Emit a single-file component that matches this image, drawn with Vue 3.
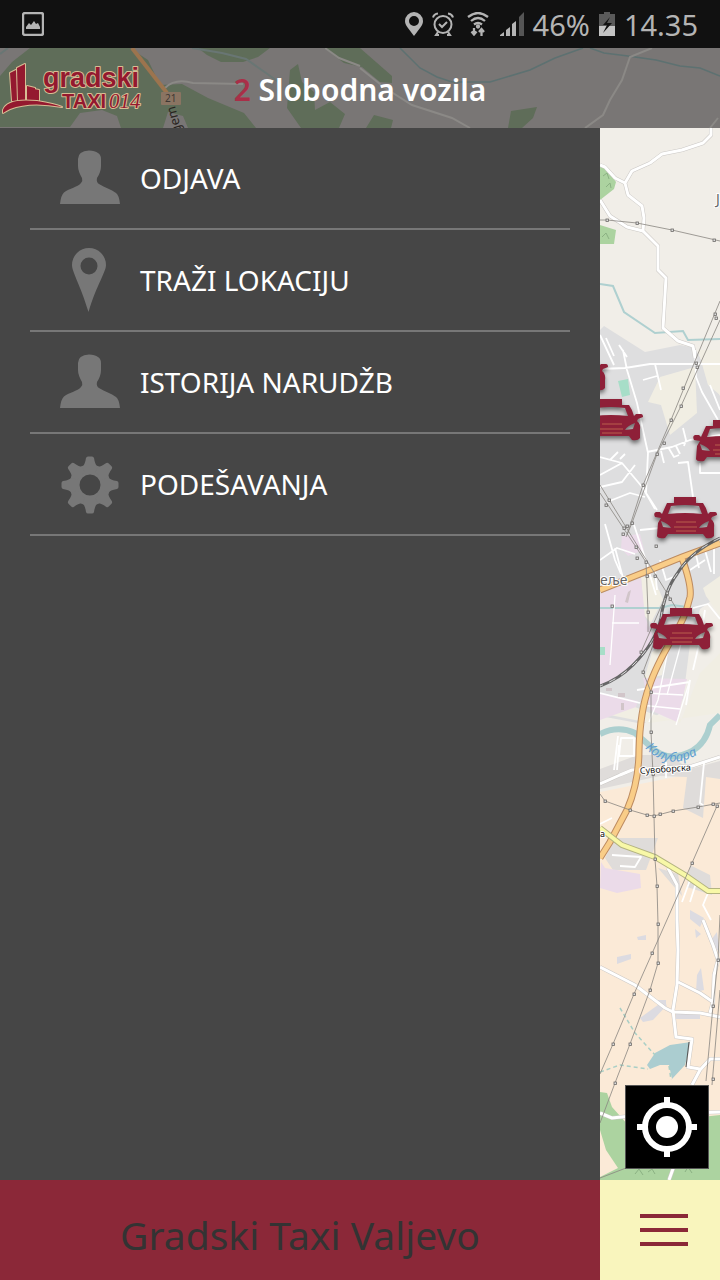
<template>
  <div class="app">
    <div class="status-bar">
      <svg class="status-picture" width="22" height="24" viewBox="0 0 22 24">
        <rect x="1" y="1" width="20" height="22" rx="2" fill="none" stroke="#b4b4b4" stroke-width="2.4" />
        <path d="M4 17v-2l3-4 2 2 3-4 2 3 2-1 2 4v2z" fill="#b4b4b4" />
      </svg>
      <div class="status-right">
        <svg width="18" height="24" viewBox="0 0 18 24">
          <path fill-rule="evenodd" d="M9 0a9 9 0 0 0-9 9c0 4 3 7 9 15 6-8 9-11 9-15a9 9 0 0 0-9-9zm0 4a5 5 0 1 1 0 10 5 5 0 0 1 0-10z" fill="#b4b4b4" />
        </svg>
        <svg width="22" height="24" viewBox="0 0 22 24" fill="none" stroke="#b4b4b4" stroke-width="2">
          <circle cx="11" cy="12.500" r="8.500" />
          <path d="M1 5.500Q2 2 6 1.500M21 5.500Q20 2 16 1.500M7 12l3 3 5-5M6 20l-2 3h3M16 20l2 3h-3" />
        </svg>
        <svg width="28" height="24" viewBox="0 0 28 24" fill="none" stroke="#b4b4b4" stroke-width="2.300">
          <path d="M5 5Q15-3 25 5M8 9Q15 3 22 9M11 12.500Q15 9.500 19 12.500" />
          <circle cx="15" cy="14.500" r="1" />
          <path d="M11 16v6M8.500 19.500l2.500 3 2.500-3M18.500 24v-6M16 20l2.500-3 2.500 3" />
        </svg>
        <svg width="24" height="24" viewBox="0 0 24 24" fill="#b4b4b4">
          <path d="M0 24v-1l4-3v4zM6 24v-6l4-3v9zM12 24V12l4-3v15z" />
          <path d="M19 24V5l5-5v24z" fill="#555" />
        </svg>
        <span class="battery-level">46%</span>
        <svg width="16" height="24" viewBox="0 0 16 24">
          <path d="M0 2h5V0h6v2h5v12H0z" fill="#5a5a5a" />
          <path d="M0 14h16v10H0z" fill="#c4c4c4" />
          <path d="M11 5 4 13h4l-4 8 9-10H8z" fill="#111" />
        </svg>
        <span class="clock">14.35</span>
      </div>
    </div>

    <header class="top-bar">
      <svg class="top-map" viewBox="0 48 720 80" preserveAspectRatio="xMinYMin slice">
        <rect y="48" width="720" height="80" fill="#797675" />
        <g fill="#5f6d59">
          <path d="M0 76 12 62 30 48h100l18 12 12 25 22-1 26 14 36 15 12 15h-68l-5-12-15-4-5 16h-42l-4-12-15-6-22 3-10 14H0z" />
          <path d="M198 48h72l-12 9-15 5-22 0-14-7zM290 70l8-6 4 18 12 10 1 18 15-8 15 12-6 14h-38l-14-20zM324 48h36l32 28v7l-12-1-18-15-18-4zM366 128l8-13 19 5-2 8zM511 111l26-4-4 11-11 10h-14z" />
        </g>
        <path d="M0 54 8 48M192 48l30 5 24 6 20 14 14 10" fill="none" stroke="#697674" stroke-width="2" />
        <path d="M400 48l20 20 17 9 15 5 38 0 40-12 25-12 28-10M590 48l14 5 24 3 28 4 24 6 20 2 20 8" fill="none" stroke="#5d7171" stroke-width="1.500" />
        <g fill="none" stroke="#8b8986" stroke-width="2">
          <path d="M165 88q10-10 28-5l50 1M325 48l14 10 21 8M360 68l25 20 27 17 40 13 18 10M652 48l-22 9-8 23-12 20-7 15-18 13M718 118l-8 10" />
        </g>
        <path d="M132 48l35 45" stroke="#9c744e" stroke-width="4" />
        <rect x="161" y="92" width="20" height="13" rx="1" fill="#8a7462" />
        <text x="165" y="102" class="road-number">21</text>
        <text transform="translate(182 132) rotate(-105)" class="road-name">gem</text>
      </svg>

      <svg class="logo" width="144" height="60" viewBox="0 56 144 60" role="img" aria-label="Gradski Taxi 014">
        <g fill="#94192f" stroke="#d8bd94" stroke-width="2" paint-order="stroke" stroke-linejoin="round">
          <path d="M10 73 16 70l1 31h-5zM17 68l8-4v39h-7zM27 86l8 2v15h-8zM34 89l5 1v12h-5z" />
          <path d="M3 110Q7 98 37 101q18 3 25 6-32-6-52 2-4 2-7 4z" />
          <text x="43" y="87" class="logo-name">gradski</text>
          <text x="62" y="108" class="logo-taxi">TAXI</text>
          <text x="109" y="108" class="logo-code">014</text>
        </g>
      </svg>
      <h1 class="vehicles"><span class="count">2</span> Slobodna vozila</h1>
    </header>

    <main class="content">
      <nav class="drawer">
        <ul class="menu">
          <li v-for="item in menuItems" :key="item.label">
            <a href="#" class="menu-link">
              <svg width="60" height="64" viewBox="0 0 60 64" fill="#777">
                <path v-if="item.icon === 'user'" d="M0 58Q1 49 4 46.500C8 43 18 41 21 37q2-2 1-5Q18 25 18 20v-7q0-8 11-8.500Q41 5 41 13v7q0 6-4 12-1 4 2 6c6 4 12 5 17 9q3 2 4 11z" />
                <path v-else-if="item.icon === 'pin'" fill-rule="evenodd" d="M29 0A17 17 0 0 0 12 17c0 7 8 19 16.500 47C37 36 46 24 46 17A17 17 0 0 0 29 0zm0 9.500a8.500 8.500 0 1 1 0 17 8.500 8.500 0 0 1 0-17z" />
                <template v-else>
                  <circle cx="30" cy="33" r="15.500" fill="none" stroke="#777" stroke-width="10" />
                  <path v-for="n in 8" :key="n" d="M22 15Q25 13 26 6q.5-1.500 2-1.500h4q1.500 0 2 1.500 1 7 4 9l-3 5H25z" :transform="`rotate(${n * 45} 30 33)`" />
                </template>
              </svg>
              <span>{{ item.label }}</span>
            </a>
          </li>
        </ul>
      </nav>

      <section class="map" aria-label="Mapa">
        <svg class="map-canvas" viewBox="600 128 120 1052" preserveAspectRatio="xMinYMin slice">
          <defs>
            <g id="taxi">
              <path fill-rule="evenodd" d="M20 1h22v6h7q3 4 5 11l2-2h5q2 0 2 3l-5 2-1 2q4 3 3 9v8q-2 3-8 2l-3-4H14l-3 4q-7 1-8-2l1-13 3-5-6-1q-2-4 1-5h4l2 2 5-11h7zM17 10l-3 8q17-2 34 0l-3-8q-14-2-28 0zM7 25l2 6 8 1q-2-4-10-7zM55 25q-8 3-10 7l8-1z" />
              <path d="M22 26h20M20 31h23M22 35h20" stroke="#b95e4d" stroke-width="1" />
            </g>
            <path id="river-label" d="M645 748Q670 773 702 752" />
            <filter id="taxi-shadow" x="-20%" y="-20%" width="140%" height="150%" color-interpolation-filters="sRGB">
              <feDropShadow dx="0" dy="3" stdDeviation="2" flood-opacity="0.5" />
            </filter>
          </defs>

          <rect x="600" y="128" width="120" height="1052" fill="#f1eee8" />
          <!-- fields and built-up areas -->
          <path d="M600 792l90-18 30-4v410H600z" fill="#fbead7" />
          <path d="M600 330l4-4 41 26 35-7 15 3 25 48v198l-20 15-10 35-7 55-40 25-43-8z" fill="#dededf" />
          <path d="M648 402l12-25 35-10 2 46-27 22-9-30zM698 350h22v45l-12-10zM641 577h12l10 22-12 24-7-8zM703 588l17-12v40l-14-20zM652 652l18-12-8 35-18 5zM600 693l50 20 30 10 20-50 20-20v60l-70 10-50-10z" fill="#f1eee3" />
          <path d="M600 769l38-14h30l22 14 30-8v18l-14-2-3 41-20-10 4-31-27-1-60 13zM615 838h43l-12 32h-33l-8-12zM658 868l20 6 4 22zM690 865l20 10 2 20-25-8z" fill="#dfdcda" />
          <path d="M600 594l41-16 4 39 10 24-15 19-13 13-27 13zM643 678l44 1-10 43-27-12zM600 693l38 8-2 6-36 13zM601 862l4 6 35 6 1 14-24 5-17-5zM622 536l18-2 4 16-16 6-7-8z" fill="#ebdbe9" />
          <path d="M618 381l10-2 2 16-8 2zM600 647l5 0v8h-5z" fill="#a7dec8" />
          <path d="M600 166l5 1 11 15-2 7-14 11zM600 225l16 5-2 14h-14zM600 1092l7 1 5 14 16 18 92-10v65H600z" fill="#acd3a0" />
          <path d="M603 176l4-3 2 6M606 187l4-4 1 5M602 237l4-4 3 6M635 1174l4-5 4 6M648 1172l4-3 3 5M685 1172l3-5 4 6" fill="none" stroke="#8bb183" />
          <path d="M600 1130l6 20 12 18-18 9z" fill="#fbead7" />
          <path d="M617 957l14-3v5l-14 5zM637 937l9-2v5h-8zM640 1018l22-16 5 3-14 15-10 2zM697 975l4-7 3 22-8 2zM711 940l6-8 3 22zM695 929l6 5-5 4zM676 1013h24v6h-24zM658 1000h8v7h-8zM690 910l14 8-4 9-10-8z" fill="#dcdbe1" />

          <!-- water -->
          <path d="M600 284l13 2 11 26 31 21 28-2 5 9 32-1M600 608h60l12-3 16 2" fill="none" stroke="#afd0d0" stroke-width="2" />
          <path d="M600 734q18-9 35-1l15 13q18 18 42 5 14-8 18-26l10-10" fill="none" stroke="#accfcf" stroke-width="6" />
          <path d="M691 1042l-6 23-13 14-3-14-9 0-10 4-3-4 8-12 15-8z" fill="#abcdd0" />
          <path d="M620 1008l15 25 20 22M600 1072l20-7 28 4M669 1066l2 14" fill="none" stroke="#a9cfc6" stroke-width="1.500" stroke-dasharray="4 3" />

          <!-- streets -->
          <g fill="none" stroke-linejoin="round">
            <path v-for="(road, i) in roads" :key="'edge' + i" :d="road" stroke="#cbc8c5" stroke-width="4" />
            <path v-for="(road, i) in roads" :key="'fill' + i" :d="road" stroke="#fff" stroke-width="3" />
            <path :d="streets" stroke="#fff" stroke-width="1.800" />
            <path d="M615 595l-5 70M612 623h27M670 640l-12 60-9 22M682 640l-15 55M690 680l-14 45M645 693l38 2M640 705l40 4" stroke="#fff" stroke-width="1.300" />
          </g>
          <path d="M628 592l3-2-3 13-3-1zM618 693h7v4h-7zM621 703h3v7h-3zM606 688h6v3h-6z" fill="#d1c5c9" />

          <!-- main roads and railway -->
          <g fill="none">
            <path d="M600 590l45-18 37-15 38-14M682 558q10 28 8 39-5 22-17 40-18 31-24 50-9 24-10 63 0 32-12 60l-17 32-10 16" stroke="#bd8b60" stroke-width="7" />
            <path d="M600 590l45-18 37-15 38-14M682 558q10 28 8 39-5 22-17 40-18 31-24 50-9 24-10 63 0 32-12 60l-17 32-10 16" stroke="#f9cd88" stroke-width="5" />
            <path d="M600 828l22 17 33 12 30 18 23 16h12" stroke="#b4b480" stroke-width="6" />
            <path d="M600 828l22 17 33 12 30 18 23 16h12" stroke="#f8f8a7" stroke-width="4" />
            <path d="M720 538q-30 14-43 36-12 16-16 44-5 24-28 47-14 14-33 21" stroke="#676767" stroke-width="3" />
            <path d="M720 538q-30 14-43 36-12 16-16 44-5 24-28 47-14 14-33 21" stroke="#e1e1e1" stroke-width="1" stroke-dasharray="7 7" />
          </g>

          <!-- power lines -->
          <g fill="none" stroke="#898580" stroke-width=".8">
            <path d="M600 220h7l30 3 35 7 48 11M720 301l-25 60-24 59-28 65-16 50M720 320l-39 86-24 48-25 69-6 14M600 485l37 60 30 48 12 20M600 493l46 69 2 50 0 20M667 593l-26 59M655 640l-12 32 8 20v40l2 42 1 42 1 43 2 27 1 38v39l-8 27-20 54-15 39-15 40M600 794l5 7 25 9 17 5 7 1 19-5 25-4 22-4M717 806l-25 57-22 50-36 81-21 50-13 30M720 915l-2 45-5 46-7 75M720 990l-8 95M600 1178l26-10" />
          </g>
          <rect v-for="([x, y], i) in pylons" :key="'pylon' + i" :x="x - 1" :y="y - 1" width="2.500" height="2.500" fill="#ddd" stroke="#6d6a68" stroke-width=".8" />
          <path d="M689 1042l-3 25" stroke="#555" />

          <!-- labels -->
          <text x="716" y="204" class="place">Ј</text>
          <text x="600" y="585" class="place">еље</text>
          <text x="600" y="837" class="street">а</text>
          <text transform="translate(640 774) rotate(-4)" class="street">Сувоборска</text>
          <text class="river"><textPath href="#river-label">Колубара</textPath></text>

          <g fill="#8e2038" filter="url(#taxi-shadow)">
            <use v-for="taxi in taxis" :key="taxi.id" href="#taxi" :x="taxi.x" :y="taxi.y" />
          </g>
        </svg>

        <button type="button" class="locate" aria-label="Moja lokacija">
          <svg width="60" height="60" viewBox="0 0 60 60" fill="none" stroke="#fff">
            <circle cx="30" cy="30" r="22" stroke-width="6" />
            <circle cx="30" cy="30" r="11" fill="#fff" stroke="none" />
            <path d="M30 0v9M30 51v9M0 30h9M51 30h9" stroke-width="6" />
          </svg>
        </button>
      </section>
    </main>

    <footer class="bottom-bar">
      <p class="company">Gradski Taxi Valjevo</p>
      <button type="button" class="menu-toggle" aria-label="Meni">
        <span v-for="n in 3" :key="n" class="bar"></span>
      </button>
    </footer>
  </div>
</template>

<script setup>
const menuItems = [
  { label: 'ODJAVA', icon: 'user' },
  { label: 'TRAŽI LOKACIJU', icon: 'pin' },
  { label: 'ISTORIJA NARUDŽB', icon: 'user' },
  { label: 'PODEŠAVANJA', icon: 'settings' }
]

// Top left corner of each vehicle on the map
const taxis = [
  { id: 1, x: 545, y: 348 },
  { id: 2, x: 580, y: 398 },
  { id: 3, x: 693, y: 419 },
  { id: 4, x: 654, y: 496 },
  { id: 5, x: 650, y: 607 }
]

const roads = [
  'M711 128v7l-8 8-21 7-20 4-12 9-18 8-7 12 3 12 14 11 2 12-1 13 15 15v24l8 8-3 50 15 13 15 5 2 12',
  'M600 165l5 2 10 11 10 5M600 200l10 16 17 11 16 4',
  'M668 868l9 17v35l1 30-1 35-4 25 3 27 16 2-4 28 12 2',
  'M600 967l35 18 30 23 8 4 27 1 20 4M678 982l22 11 13 9-3 11M703 920l10 25 5 15-4 15-1 27',
  'M600 784l20-9 12-5 60-4 28-9M600 1113l12 5 28-3 80-3M674 1166l-5 14M700 1070l-8 15M700 1070l10-11h10'
]

const streets = [
  'M600 369l25-1 25-4h70M623 350l4 20 10 33 11 50-2 40 11 17M695 350l1 27 6 15 16 28',
  'M600 335l14 30M606 338l8 18M619 345l8 12M643 380l14-4M655 364l6 26',
  'M647 452l25-5 18-7 30-5M683 428l3 12-2 6M661 451l3 12M668 447l6 10 5-2M676 446l4 8',
  'M600 457l22 6 21 25 12 21M600 475l22-12M600 487l22-5 13-17M607 502l23-9 15 4M610 460l8-8M620 459l5-5',
  'M678 463l10-1 5 35M700 463v10h20M710 385l10 25M605 524l10 36 6 14M634 525l10 30 12 40M640 530l20-2',
  'M600 560l17-12 18 6M615 548l8 30M660 560l6 20 10-4M655 570l2 20M690 570l15-10M705 550l6 22M695 550l4 18M714 546v28',
  'M693 608l15-4 12 15M693 670l7-30 5-30M690 680l-4 25M637 690l53-8M600 693l40 10M618 736l-4 34M621 738h13v18h-15z',
  'M617 770l2-25M666 762v16M704 763l-4 40 4 3M612 855l29 2-6 10-15-1M600 824l12-6M690 880l-8 22M697 880l-7 22M708 893l-5 12 8 15'
].join('')

const pylons = [
  [607, 220], [637, 223], [672, 230], [714, 240], [715, 314], [716, 318], [696, 363], [697, 367],
  [683, 388], [681, 406], [671, 420], [664, 443], [657, 454], [643, 485], [609, 500], [606, 505],
  [632, 523], [627, 526], [624, 528], [623, 534], [636, 547], [656, 546], [637, 558], [646, 562],
  [647, 576], [655, 576], [667, 593], [670, 599], [612, 606], [648, 612], [641, 652], [643, 672],
  [651, 692], [651, 732], [653, 774], [605, 801], [630, 810], [647, 815], [654, 816], [660, 814],
  [673, 811], [698, 807], [713, 804], [717, 806], [692, 863], [655, 859], [657, 886],
  [658, 924], [652, 953], [658, 963], [718, 960], [650, 990], [634, 994], [713, 1006], [613, 1044],
  [630, 1044], [615, 1083], [713, 1079]
]
</script>

<style>
body {
  margin: 0;
}
</style>

<style scoped>
.app {
  min-height: 100vh;
  display: flex;
  flex-direction: column;
  background: #464646;
  font-family: "Noto Sans", "Open Sans", sans-serif;
}

svg {
  display: block;
  flex-shrink: 0;
}

.status-bar {
  display: flex;
  align-items: center;
  justify-content: space-between;
  height: 48px;
  padding: 0 22px;
  background: #111;
  color: #b4b4b4;
  font-size: 29px;
}

.status-right {
  display: flex;
  align-items: center;
  gap: 9px;
}

.top-bar {
  position: relative;
  display: flex;
  align-items: center;
  justify-content: center;
  height: 80px;
  overflow: hidden;
  background: #797675;
}

.top-map {
  position: absolute;
  inset: 0;
  width: 100%;
  height: 100%;
}

.road-number {
  font-size: 10px;
  fill: #3d3733;
}

.road-name {
  font-size: 13px;
  fill: #29251f;
}

.logo {
  position: absolute;
  left: 0;
  top: 8px;
}

.logo-name {
  font: bold 27px "Liberation Sans", sans-serif;
}

.logo-taxi {
  font: bold 20px "Liberation Sans", sans-serif;
}

.logo-code {
  font: italic 21px "Liberation Serif", serif;
}

.vehicles {
  position: relative;
  margin: 0;
  padding-top: 2px;
  color: #fff;
  font-size: 30px;
  font-weight: 600;
}

.count {
  color: #a92f48;
}

.content {
  flex: 1;
  display: grid;
  grid-template-columns: 5fr 1fr;
}

.drawer {
  padding: 0 30px;
  background: #464646;
}

.menu {
  margin: 0;
  padding: 0;
  list-style: none;
}

.menu-link {
  display: flex;
  align-items: center;
  gap: 20px;
  height: 100px;
  padding: 0 30px;
  border-bottom: 2px solid #777;
  color: #fff;
  font-size: 28px;
  text-decoration: none;
}

.map {
  position: relative;
  overflow: hidden;
  background: #f1eee8;
}

.map-canvas {
  position: absolute;
  inset: 0;
  width: 100%;
  height: 100%;
}

.place {
  font-size: 14px;
  fill: #666;
  stroke: #fff;
  stroke-width: 2px;
  paint-order: stroke;
}

.street {
  font-size: 9px;
  fill: #111;
  stroke: #fff;
  stroke-width: 2px;
  paint-order: stroke;
}

.river {
  font-size: 13px;
  font-style: italic;
  fill: #5f9ed1;
}

.locate {
  position: absolute;
  right: 11px;
  bottom: 11px;
  display: flex;
  align-items: center;
  justify-content: center;
  width: 84px;
  height: 84px;
  padding: 0;
  border: 1px solid #555;
  background: #000;
  cursor: pointer;
}

.bottom-bar {
  display: grid;
  grid-template-columns: 5fr 1fr;
  height: 100px;
  background: #8b2838;
}

.company {
  display: flex;
  align-items: center;
  justify-content: center;
  margin: 0;
  padding-top: 8px;
  color: #333;
  font-size: 39px;
}

.menu-toggle {
  display: flex;
  flex-direction: column;
  justify-content: center;
  gap: 10px;
  padding: 0 32px 0 40px;
  border: 0;
  background: #f9f5bd;
  cursor: pointer;
}

.bar {
  height: 4px;
  background: #8b2838;
}
</style>
